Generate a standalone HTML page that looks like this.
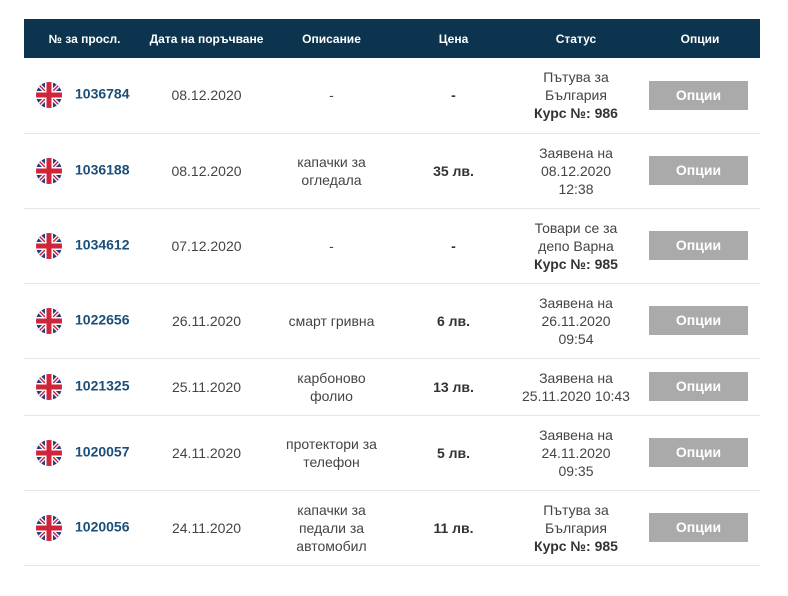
<!DOCTYPE html>
<html><head><meta charset="utf-8"><style>
body{margin:0;background:#fff;font-family:"Liberation Sans",sans-serif;}
table{position:absolute;left:24px;top:19px;width:736px;border-collapse:collapse;table-layout:fixed}
th{background:#0c344f;color:#fff;font-size:12px;font-weight:bold;height:39px;padding:0;text-align:center}
td{border-bottom:1px solid #e6e6e6;text-align:center;font-size:14px;color:#444;line-height:18px;padding:0}
td.n{text-align:left;color:#1b4e78;font-weight:bold;font-size:14px}
td.n svg{vertical-align:middle;margin:0 12px 0 11px}
td.p{font-weight:bold;color:#333}
.b{display:inline-block;width:99px;height:29px;line-height:29px;background:#aaaaaa;color:#fff;font-weight:bold;font-size:14px;margin-right:3px}
b{color:#333}
</style></head><body>
<svg width="0" height="0" style="position:absolute"><defs>
<clipPath id="c"><circle cx="14" cy="14" r="13"/></clipPath>
<g id="f"><g clip-path="url(#c)"><rect width="28" height="28" fill="#243f86"/>
<path d="M0 0L28 28M28 0L0 28" stroke="#fff" stroke-width="4"/>
<path d="M0 0L28 28M28 0L0 28" stroke="#d0243a" stroke-width="1.5"/>
<path d="M14 0V28M0 14H28" stroke="#fff" stroke-width="8"/>
<path d="M14 0V28M0 14H28" stroke="#d0243a" stroke-width="5"/></g></g></defs></svg>
<table>
<colgroup><col style="width:121px"><col style="width:123px"><col style="width:127px"><col style="width:117px"><col style="width:128px"><col style="width:120px"></colgroup>
<tr><th>№ за просл.</th><th>Дата на поръчване</th><th>Описание</th><th>Цена</th><th>Статус</th><th>Опции</th></tr>
<tr style="height:75px"><td class="n"><svg width="28" height="28"><use href="#f"/></svg>1036784</td><td>08.12.2020</td><td>-</td><td class="p">-</td><td>Пътува за<br>България<br><b>Курс №: 986</b></td><td><span class="b">Опции</span></td></tr>
<tr style="height:75px"><td class="n"><svg width="28" height="28"><use href="#f"/></svg>1036188</td><td>08.12.2020</td><td>капачки за<br>огледала</td><td class="p">35 лв.</td><td>Заявена на<br>08.12.2020<br>12:38</td><td><span class="b">Опции</span></td></tr>
<tr style="height:75px"><td class="n"><svg width="28" height="28"><use href="#f"/></svg>1034612</td><td>07.12.2020</td><td>-</td><td class="p">-</td><td>Товари се за<br>депо Варна<br><b>Курс №: 985</b></td><td><span class="b">Опции</span></td></tr>
<tr style="height:75px"><td class="n"><svg width="28" height="28"><use href="#f"/></svg>1022656</td><td>26.11.2020</td><td>смарт гривна</td><td class="p">6 лв.</td><td>Заявена на<br>26.11.2020<br>09:54</td><td><span class="b">Опции</span></td></tr>
<tr style="height:57px"><td class="n"><svg width="28" height="28"><use href="#f"/></svg>1021325</td><td>25.11.2020</td><td>карбоново<br>фолио</td><td class="p">13 лв.</td><td>Заявена на<br>25.11.2020 10:43</td><td><span class="b">Опции</span></td></tr>
<tr style="height:75px"><td class="n"><svg width="28" height="28"><use href="#f"/></svg>1020057</td><td>24.11.2020</td><td>протектори за<br>телефон</td><td class="p">5 лв.</td><td>Заявена на<br>24.11.2020<br>09:35</td><td><span class="b">Опции</span></td></tr>
<tr style="height:75px"><td class="n"><svg width="28" height="28"><use href="#f"/></svg>1020056</td><td>24.11.2020</td><td>капачки за<br>педали за<br>автомобил</td><td class="p">11 лв.</td><td>Пътува за<br>България<br><b>Курс №: 985</b></td><td><span class="b">Опции</span></td></tr>
</table>
</body></html>
